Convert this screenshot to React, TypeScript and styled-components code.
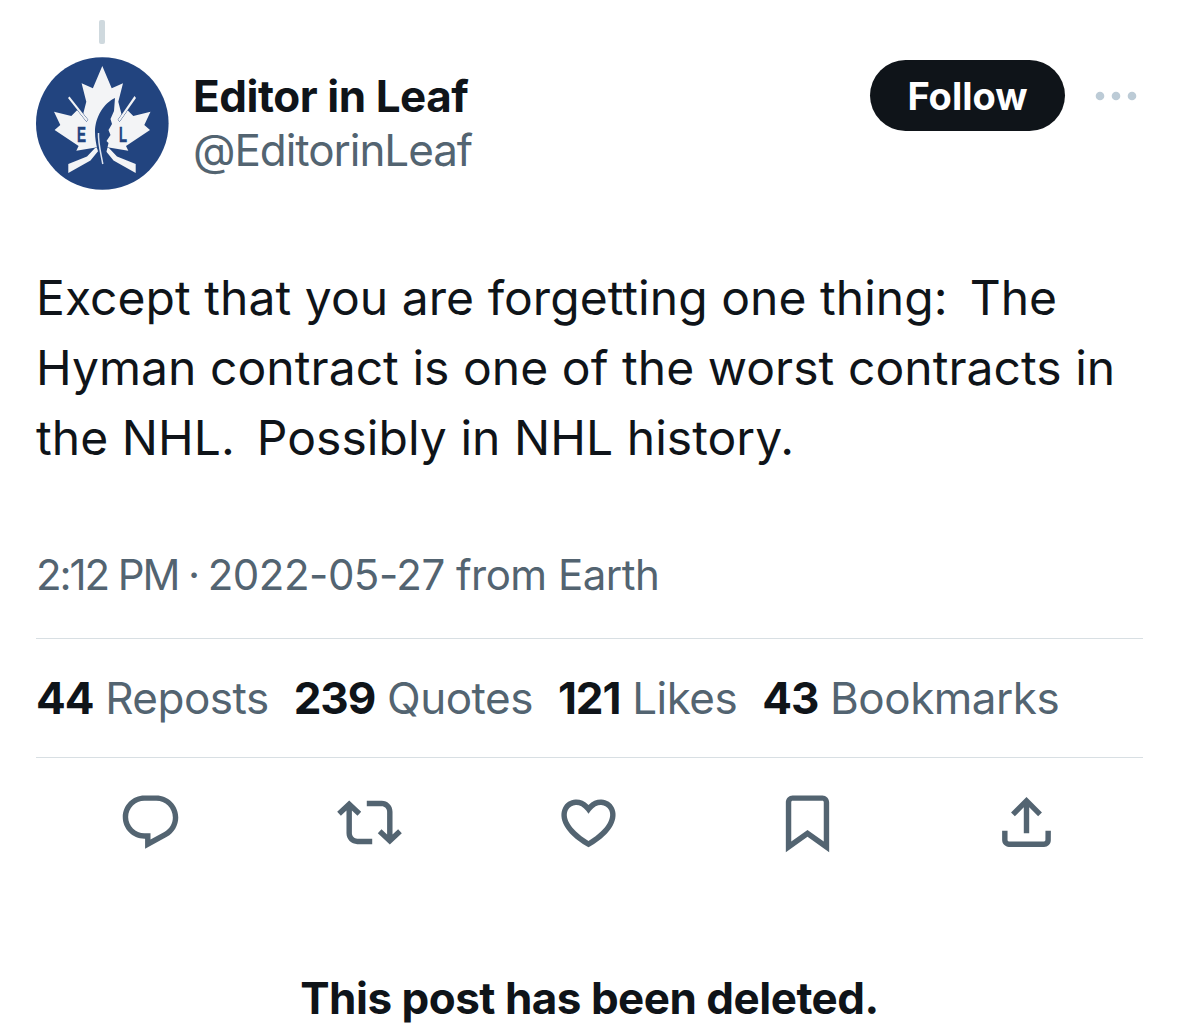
import React from "react";
import styled, { createGlobalStyle } from "styled-components";

const Global = createGlobalStyle`
  html, body { margin: 0; padding: 0; background: #fff; }
  body { font-family: Inter, "Liberation Sans", Arial, sans-serif; color: #0f1419; }
`;

const Page = styled.div`
  width: 1179px;
  height: 1033px;
  overflow: hidden;
  box-sizing: border-box;
  padding: 20px 36px 0;
  display: flex;
  flex-direction: column;
`;
const ThreadLine = styled.div`
  width: 6px;
  height: 24px;
  margin-left: 63px;
  margin-bottom: 13px;
  border-radius: 2px;
  background: #cfd9de;
`;
const Header = styled.div`
  display: flex;
  align-items: flex-start;
`;
const Avatar = styled.svg`
  width: 133px;
  height: 133px;
  flex: none;
`;
const Names = styled.div`
  margin-left: 24px;
  margin-top: 11px;
  flex: 1;
`;
const Name = styled.div`
  font-size: 44px;
  font-weight: 700;
  line-height: 56px;
  letter-spacing: -0.45px;
`;
const Handle = styled.div`
  font-size: 44px;
  font-weight: 400;
  line-height: 52px;
  letter-spacing: -1.05px;
  color: #536471;
`;
const FollowButton = styled.button`
  width: 195px;
  height: 71px;
  margin-top: 3px;
  border: 0;
  border-radius: 36px;
  background: #0f1419;
  color: #fff;
  font: 700 38px Inter, "Liberation Sans", sans-serif;
`;
const More = styled.svg`
  width: 44px;
  height: 12px;
  margin: 33px 5px 0 29px;
  flex: none;
`;
const Body = styled.div`
  margin-top: 73px;
  font-size: 48px;
  line-height: 70px;
  letter-spacing: 0.05px;
  white-space: pre;
`;
const SentenceGap = styled.span`
  letter-spacing: -2.5px;
`;
const Meta = styled.div`
  margin-top: 74px;
  font-size: 42px;
  line-height: 56px;
  letter-spacing: -0.5px;
  color: #536471;
`;
const MetaTime = styled.span`
  letter-spacing: -2.1px;
`;
const Divider = styled.div`
  height: 1px;
  background: #d8dfe3;
`;
const MetaDivider = styled(Divider)`
  margin-top: 35px;
`;
const Stats = styled.div`
  height: 118px;
  display: flex;
  align-items: center;
  gap: 25px;
  font-size: 44px;
  letter-spacing: -0.5px;
  color: #536471;
  white-space: pre;
`;
const Count = styled.b`
  font-weight: 700;
  letter-spacing: -1.1px;
  color: #0f1419;
`;
const Actions = styled.div`
  margin-top: 32px;
  padding: 0 84px 0 82px;
  display: flex;
  justify-content: space-between;
  color: #536471;
`;
const ActionIcon = styled.svg`
  width: 65px;
  height: 65px;
  fill: currentColor;
`;
const Deleted = styled.div`
  margin-top: 115px;
  text-align: center;
  font-size: 44px;
  font-weight: 700;
  line-height: 56px;
  letter-spacing: -0.5px;
`;

const icons = [
  "M1.751 10c0-4.42 3.584-8 8.005-8h4.366c4.49 0 8.129 3.64 8.129 8.13 0 2.96-1.607 5.68-4.196 7.11l-8.054 4.46v-3.69h-.067c-4.49.1-8.183-3.51-8.183-8.01zm8.005-6c-3.317 0-6.005 2.69-6.005 6 0 3.37 2.77 6.08 6.138 6.01l.351-.01h1.761v2.3l5.087-2.81c1.951-1.08 3.163-3.13 3.163-5.36 0-3.39-2.744-6.13-6.129-6.13H9.756z",
  "M4.5 3.88l4.432 4.14-1.364 1.46L5.5 7.55V16c0 1.1.896 2 2 2H13v2H7.5c-2.209 0-4-1.79-4-4V7.55L1.432 9.48.068 8.02 4.5 3.88zM16.5 6H11V4h5.5c2.209 0 4 1.79 4 4v8.45l2.068-1.93 1.364 1.46-4.432 4.14-4.432-4.14 1.364-1.46 2.068 1.93V8c0-1.1-.896-2-2-2z",
  "M16.697 5.5c-1.222-.06-2.679.51-3.89 2.16l-.805 1.09-.806-1.09C9.984 6.01 8.526 5.44 7.304 5.5c-1.243.07-2.349.78-2.91 1.91-.552 1.12-.633 2.78.479 4.82 1.074 1.97 3.257 4.27 7.129 6.61 3.87-2.34 6.052-4.64 7.126-6.61 1.111-2.04 1.03-3.7.477-4.82-.561-1.13-1.666-1.84-2.908-1.91zm4.187 7.69c-1.351 2.48-4.001 5.12-8.379 7.67l-.503.3-.504-.3c-4.379-2.55-7.029-5.19-8.382-7.67-1.36-2.5-1.41-4.86-.514-6.67.887-1.79 2.647-2.91 4.601-3.01 1.651-.09 3.368.56 4.798 2.01 1.429-1.45 3.146-2.1 4.796-2.01 1.954.1 3.714 1.22 4.601 3.01.896 1.81.846 4.17-.514 6.67z",
  "M4 4.5C4 3.12 5.119 2 6.5 2h11C18.881 2 20 3.12 20 4.5v18.44l-8-5.71-8 5.71V4.5zM6.5 4c-.276 0-.5.22-.5.5v14.56l6-4.29 6 4.29V4.5c0-.28-.224-.5-.5-.5h-11z",
  "M12 2.59l5.7 5.7-1.41 1.42L13 6.41V16h-2V6.41l-3.3 3.3-1.41-1.42L12 2.59zM21 15l-.02 3.51c0 1.38-1.12 2.49-2.5 2.49H5.5C4.11 21 3 19.88 3 18.5V15h2v3.5c0 .28.22.5.5.5h12.98c.28 0 .5-.22.5-.5L19 15h2z",
];

const stats = [
  ["44", "Reposts"],
  ["239", "Quotes"],
  ["121", "Likes"],
  ["43", "Bookmarks"],
];

const BLUE = "#22447f";
const WHITE = "#f3f4f6";
const leaf =
  "M66.3 9 L75.7 31.3 L87 26.3 L82.3 44.7 L85.7 58 L91.3 53 L97.3 59 L114.5 54.7 L108.3 68 L114 73 L90 89 L92.3 93.7 L71.3 90.3 L66.3 96 L61.3 90.3 L40.3 93.7 L42.6 89 L18.6 73 L24.3 68 L18 54.7 L35.3 59 L41.3 53 L46.9 58 L50.3 44.7 L45.6 26.3 L56.9 31.3 Z";

export default function App() {
  return (
    <Page>
      <Global />
      <ThreadLine />
      <Header>
        <Avatar viewBox="0 0 133 133" aria-label="Editor in Leaf">
          <circle cx="66.3" cy="66.5" r="66.3" fill={BLUE} />
          <path d={leaf} fill={WHITE} />
          <path d="M33.5 39.5 L52 63 L50.5 64.5 L32 41 Z" fill={WHITE} stroke={BLUE} strokeWidth="0.9" paintOrder="stroke" />
          <path d="M98.5 39 L82 63 L83.5 64.5 L100 41 Z" fill={WHITE} stroke={BLUE} strokeWidth="0.9" paintOrder="stroke" />
          <path d="M32.3 107 L51 99.5 L60 90 L63 93 L54.5 103.5 L32.3 116 Z" fill={WHITE} stroke={BLUE} strokeWidth="0.9" paintOrder="stroke" />
          <path d="M99.7 107 L81 99.5 L72 90 L69 93 L77.5 103.5 L99.7 116 Z" fill={WHITE} stroke={BLUE} strokeWidth="0.9" paintOrder="stroke" />
          <path d="M79 41 C68 46 59 60 59 75 C59 87 63 98 67 110 C68 102 71 94 72.5 86 L70.5 84 L74.5 78 L72.5 73 L76 67 L74.5 62 L78 54 Z" fill={BLUE} />
          <path d="M62.5 76 C62 86 65 97 66.8 107" fill="none" stroke="#dfe5f0" strokeWidth="1.5" />
          <text x="45.5" y="85" fontFamily="Liberation Sans, sans-serif" fontSize="22" fontWeight="700" fill={BLUE} stroke={BLUE} strokeWidth="0.5" textAnchor="middle" textLength="9" lengthAdjust="spacingAndGlyphs">E</text>
          <text x="87" y="85" fontFamily="Liberation Sans, sans-serif" fontSize="22" fontWeight="700" fill={BLUE} stroke={BLUE} strokeWidth="0.5" textAnchor="middle" textLength="8" lengthAdjust="spacingAndGlyphs">L</text>
        </Avatar>
        <Names>
          <Name>Editor in Leaf</Name>
          <Handle>@EditorinLeaf</Handle>
        </Names>
        <FollowButton>Follow</FollowButton>
        <More viewBox="0 0 44 12">
          <circle cx="6" cy="6" r="4.3" fill="#bccbd6" />
          <circle cx="22" cy="6" r="4.3" fill="#bccbd6" />
          <circle cx="38" cy="6" r="4.3" fill="#bccbd6" />
        </More>
      </Header>
      <Body>
        Except that you are forgetting one thing:<SentenceGap>{"  "}</SentenceGap>The{"\n"}
        Hyman contract is one of the worst contracts in{"\n"}
        the NHL.<SentenceGap>{"  "}</SentenceGap>Possibly in NHL history.
      </Body>
      <Meta>
        <MetaTime>2:12 PM · </MetaTime>2022-05-27 from Earth
      </Meta>
      <MetaDivider />
      <Stats>
        {stats.map(([n, label]) => (
          <span key={label}>
            <Count>{n}</Count> {label}
          </span>
        ))}
      </Stats>
      <Divider />
      <Actions>
        {icons.map((d) => (
          <ActionIcon key={d} viewBox="0 0 24 24">
            <path d={d} />
          </ActionIcon>
        ))}
      </Actions>
      <Deleted>This post has been deleted.</Deleted>
    </Page>
  );
}
